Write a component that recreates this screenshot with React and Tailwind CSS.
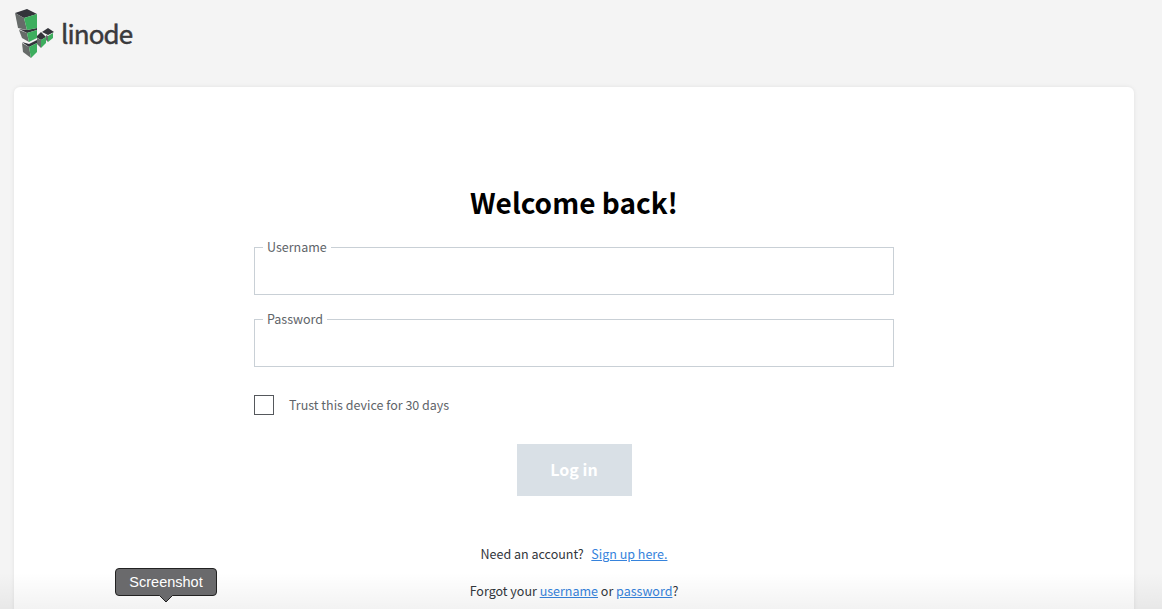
import React from 'react'

const DARK = '#33343a'
const GREY = '#666b69'
const GREEN = '#3dae5e'

// each cube: top face, left face, green face (drawn bottom of the stack first)
const cubes = [
  ['42,32 48,28 54,32 48,35', '46,35 48,36 48,42 46,40', '48,36 53,33 53,38 48,42'],
  ['36,37 41,32 46,37 41,40', '37,38 41,40 41,48 37,44', '41,40 46,37 46,43 41,48'],
  ['22,42 29,44 37,40 37,43 29,47', '22,43 29,47 31,58 23,52', '29,47 37,43 37,52 31,58'],
  ['19,29 27,30 37,28 37,30 27,33', '19,30 27,33 29,42 22,38', '27,33 37,30 37,38 29,42'],
  ['15,13 27,9 37,14 24,18', '15,13 24,18 27,30 18,28', '24,18 37,14 37,28 27,30'],
]

const Logo = () => (
  <svg width="42" height="50" viewBox="14 8 42 50" className="block shrink-0">
    {cubes.map(([top, left, front], i) => (
      <g key={i}>
        <polygon points={top} fill={DARK} />
        <polygon points={left} fill={GREY} />
        <polygon points={front} fill={GREEN} />
      </g>
    ))}
  </svg>
)

const Field = ({ label }) => (
  <fieldset className="h-[55px] w-full border border-[#c9d0d6] pl-2">
    <legend className="px-1 text-[12.5px] leading-[14px] text-[#606469]">{label}</legend>
  </fieldset>
)

export default function App() {
  return (
    <div
      className="relative h-[609px] overflow-hidden bg-[#f4f4f4]"
      style={{ fontFamily: '"Noto Sans CJK SC", "Noto Sans", sans-serif' }}
    >
      {/* Header */}
      <header className="flex h-[87px] items-start pl-[14px] pt-[8px]">
        <Logo />
        <span className="ml-[5px] mt-[5px] text-[26px] leading-[40px] tracking-[-0.9px] text-[#3a3a3c] [-webkit-text-stroke:0.5px_#3a3a3c]">
          linode
        </span>
      </header>

      {/* Card */}
      <main className="mx-[14px] flex h-[560px] w-[1120px] flex-col items-center rounded-md bg-white pt-[93px] shadow-[0_0_4px_rgba(0,0,0,0.08)]">
        <h1 className="-mt-px text-[28px] leading-[46px] font-semibold text-black">Welcome back!</h1>

        <div className="mt-[15px] flex w-[640px] flex-col gap-[17px]">
          <Field label="Username" />
          <Field label="Password" />
        </div>

        <label className="mt-[28px] flex w-[640px] items-center">
          <span className="h-5 w-5 border border-[#55585c] bg-white" />
          <span className="ml-[15px] text-[12.5px] leading-5 text-[#606469]">Trust this device for 30 days</span>
        </label>

        <button className="mt-[29px] h-[52px] w-[115px] bg-[#d9e0e6] pb-[2px] text-[16px] font-semibold text-white">
          Log in
        </button>

        <p className="mt-[48px] text-[12.5px] leading-5 text-[#32363c]">
          Need an account?{'\u00a0\u00a0'}
          <a className="ml-[2px] text-[#3683dc] underline">Sign up here.</a>
        </p>
        <p className="mt-[17px] text-[12.5px] leading-5 text-[#32363c]">
          Forgot your <a className="text-[#3683dc] underline">username</a> or{' '}
          <a className="text-[#3683dc] underline">password</a>?
        </p>
      </main>

      {/* Dock shade along the bottom edge */}
      <div className="pointer-events-none absolute inset-x-0 bottom-0 h-[36px] bg-gradient-to-b from-transparent to-black/5" />

      {/* Screenshot tooltip */}
      <div className="absolute left-[115px] top-[568px]">
        <div
          className="flex h-[28px] w-[102px] items-center justify-center rounded-[4px] border border-[#222] bg-[#6a6a6c] pt-px text-[14.5px] text-white"
          style={{ fontFamily: '"Liberation Sans", Arial, sans-serif' }}
        >
          Screenshot
        </div>
        <svg width="14" height="8" viewBox="0 0 14 8" className="absolute left-[44px] top-[27px]">
          <path d="M0 0 L7 7 L14 0 Z" fill="#6a6a6c" />
          <path d="M0.5 0.5 L7 7 L13.5 0.5" fill="none" stroke="#222" />
        </svg>
      </div>
    </div>
  )
}
